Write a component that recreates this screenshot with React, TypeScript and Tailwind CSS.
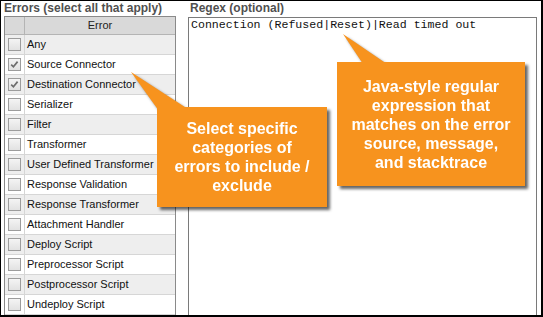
import React from "react";

const items = [
  "Any",
  "Source Connector",
  "Destination Connector",
  "Serializer",
  "Filter",
  "Transformer",
  "User Defined Transformer",
  "Response Validation",
  "Response Transformer",
  "Attachment Handler",
  "Deploy Script",
  "Preprocessor Script",
  "Postprocessor Script",
  "Undeploy Script",
];
const checked = new Set([1, 2]);

function Checkbox({ on }: { on: boolean }) {
  return (
    <div className="w-[13px] h-[13px] border border-[#9c9c9c] bg-gradient-to-b from-[#f4f4f4] to-[#e2e2e2] flex items-center justify-center">
      {on && (
        <svg width="11" height="11" viewBox="0 0 11 11">
          <path d="M2.2 5.6 L4.4 7.8 L8.6 2.6" fill="none" stroke="#6e6e6e" strokeWidth="1.7" />
        </svg>
      )}
    </div>
  );
}

export default function App() {
  return (
    <div className="relative w-[543px] h-[317px] overflow-hidden bg-white border-t border-l border-r-2 border-b-2 border-black font-['Liberation_Sans',Arial,sans-serif]">
      <div className="flex h-full pl-[3px] gap-[12px]">
        {/* Left: errors */}
        <div className="flex flex-col w-[172px] h-full">
          <div className="h-[16px] text-[12px] leading-[15px] font-bold text-[#505050] whitespace-nowrap">
            Errors (select all that apply)
          </div>
          <div className="flex-1 border-t border-l border-r border-[#8a8a8a] flex flex-col">
            <div className="flex h-[18px] bg-[#d9d9d9] border-b border-[#b4b4b4] shrink-0">
              <div className="w-[20px] border-r border-[#b4b4b4] shrink-0" />
              <div className="flex-1 flex items-center justify-center text-[11px] text-[#222]">
                Error
              </div>
            </div>
            {items.map((t, i) => (
              <div
                key={t}
                className={`flex h-[20px] shrink-0 border-b border-[#d6d6d6] ${i % 2 === 0 ? "bg-[#eeeeee]" : "bg-white"}`}
              >
                <div className="w-[20px] shrink-0 border-r border-[#d6d6d6] flex items-center justify-center">
                  <Checkbox on={checked.has(i)} />
                </div>
                <div className="flex-1 flex items-center pl-[2px] text-[11px] text-[#111] whitespace-nowrap">
                  {t}
                </div>
              </div>
            ))}
          </div>
        </div>

        {/* Right: regex */}
        <div className="flex flex-col w-[349px] h-full">
          <div className="h-[16px] pl-[2px] text-[12px] leading-[15px] font-bold text-[#505050] whitespace-nowrap">
            Regex (optional)
          </div>
          <div className="flex-1 border-t border-l border-r border-[#7a7a7a] pl-[2px] font-['Liberation_Mono',monospace] text-[11.6px] leading-[14px] text-[#111] whitespace-pre">
            Connection (Refused|Reset)|Read timed out
          </div>
        </div>
      </div>

      {/* Left callout */}
      <div className="absolute left-[156px] top-[106px] w-[170px] h-[100px] bg-[#f7931e] drop-shadow-[3px_3px_1.5px_rgba(0,0,0,0.6)] flex flex-col items-center justify-center text-white font-bold text-[16px] leading-[19px] text-center">
        <svg className="absolute left-[-26px] top-[-35px]" width="60" height="37" viewBox="0 0 60 37">
          <polygon points="0,0 26.5,37 57,37" fill="#f7931e" />
        </svg>
        <span className="relative">Select specific</span>
        <span className="relative">categories of</span>
        <span className="relative">errors to include /</span>
        <span className="relative">exclude</span>
      </div>

      {/* Right callout */}
      <div className="absolute left-[336px] top-[61px] w-[188px] h-[124px] bg-[#f7931e] drop-shadow-[3px_3px_1.5px_rgba(0,0,0,0.6)] flex flex-col items-center justify-center text-white font-bold text-[16px] leading-[19px] text-center">
        <svg className="absolute left-[6px] top-[-28px]" width="44" height="30" viewBox="0 0 44 30">
          <polygon points="0,0 20,30 44,30" fill="#f7931e" />
        </svg>
        <span className="relative">Java-style regular</span>
        <span className="relative">expression that</span>
        <span className="relative">matches on the error</span>
        <span className="relative">source, message,</span>
        <span className="relative">and stacktrace</span>
      </div>
    </div>
  );
}
